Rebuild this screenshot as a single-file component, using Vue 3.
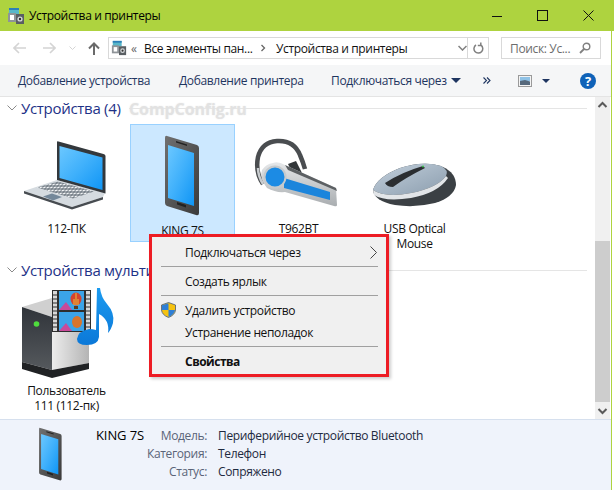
<template>
  <div class="window">
    <svg class="defs" width="0" height="0">
      <defs>
        <linearGradient id="screenGrad" x1="0" y1="0" x2="1" y2="1">
          <stop offset="0" stop-color="#6cc8ff" />
          <stop offset="0.5" stop-color="#3fb0fb" />
          <stop offset="1" stop-color="#0f95f5" />
        </linearGradient>
        <linearGradient id="phoneGrad" x1="0" y1="0" x2="1" y2="1">
          <stop offset="0" stop-color="#707070" />
          <stop offset="1" stop-color="#3a3a3a" />
        </linearGradient>
        <linearGradient id="silverGrad" x1="0" y1="0" x2="0" y2="1">
          <stop offset="0" stop-color="#e6e8ea" />
          <stop offset="1" stop-color="#a9adb0" />
        </linearGradient>
        <linearGradient id="mouseGrad" x1="0" y1="0" x2="1" y2="1">
          <stop offset="0" stop-color="#c3d0dc" />
          <stop offset="1" stop-color="#8b9dae" />
        </linearGradient>
        <linearGradient id="boxGrad" x1="0" y1="0" x2="1" y2="0">
          <stop offset="0" stop-color="#ececec" />
          <stop offset="1" stop-color="#b4b4b4" />
        </linearGradient>
        <linearGradient id="frontGrad" x1="0" y1="0" x2="0" y2="1">
          <stop offset="0" stop-color="#30343a" />
          <stop offset="1" stop-color="#55595d" />
        </linearGradient>
        <linearGradient id="noteGrad" x1="0" y1="0" x2="0" y2="1">
          <stop offset="0" stop-color="#1b9bf0" />
          <stop offset="1" stop-color="#0b78d8" />
        </linearGradient>
        <pattern id="keys" width="3.500" height="3" patternUnits="userSpaceOnUse" patternTransform="skewX(-38)">
          <rect width="3.500" height="3" fill="#5b6670" />
          <rect x="0.5" y="0.5" width="2.600" height="2" fill="#f1f3f5" />
        </pattern>
        <symbol id="phone" viewBox="160 130 48 86">
          <path d="M168 133 L198 142 Q200 143 200 145 L200 210 Q200 213 197 212 L168 203 Q166 202 166 200 L166 135 Q166 132 168 133Z" fill="url(#phoneGrad)" />
          <path d="M169 142 L195 150 L195 203 L169 195Z" fill="url(#screenGrad)" />
          <path d="M177 138 L188 141.5 L188 143 L177 139.5Z" fill="#222" />
          <path d="M178 199 L187 202 L187 204.5 L178 201.5Z" fill="#222" />
        </symbol>
        <symbol id="devices" viewBox="0 0 18 18">
          <rect x="2" y="1" width="10" height="6" fill="#58b7c9" />
          <rect x="2" y="1" width="10" height="2" fill="#2c7fb8" />
          <rect x="1" y="6" width="8" height="9" fill="#8f9498" />
          <rect x="3" y="8" width="4" height="5" fill="#fff" />
          <rect x="9" y="7" width="8" height="10" fill="#5a5f63" />
          <circle cx="13" cy="12" r="2.6" fill="#d6d9db" />
          <circle cx="13" cy="12" r="1.2" fill="#333" />
        </symbol>
      </defs>
    </svg>

    <div class="titlebar">
      <svg class="title-icon" width="18" height="18"><use href="#devices" /></svg>
      <span class="title-text">Устройства и принтеры</span>
      <div class="win-controls">
        <svg width="10" height="10" viewBox="0 0 10 10"><path d="M0 5.5H10" stroke="#111" fill="none" /></svg>
        <svg width="11" height="11" viewBox="0 0 11 11"><rect x="0.5" y="0.5" width="10" height="10" stroke="#111" fill="none" /></svg>
        <svg width="11" height="11" viewBox="0 0 11 11"><path d="M0.5 0.5L10.5 10.5M10.5 0.5L0.5 10.5" stroke="#111" fill="none" /></svg>
      </div>
    </div>

    <div class="navbar">
      <svg class="nav-back" width="13" height="12" viewBox="0 0 13 12"><path d="M6 1L1 6L6 11M1 6H13" stroke="#d4d4d4" stroke-width="1.6" fill="none" /></svg>
      <svg class="nav-fwd" width="13" height="12" viewBox="0 0 13 12"><path d="M7 1L12 6L7 11M12 6H0" stroke="#d4d4d4" stroke-width="1.6" fill="none" /></svg>
      <svg class="nav-down" width="7" height="5" viewBox="0 0 7 5"><path d="M0.5 0.5L3.5 3.5L6.5 0.5" stroke="#d4d4d4" fill="none" /></svg>
      <svg class="nav-up" width="12" height="13" viewBox="0 0 12 13"><path d="M1 6.5L6 1.5L11 6.5M6 1.5V13" stroke="#6a6a6a" stroke-width="2" fill="none" /></svg>
      <div class="address">
        <svg class="addr-icon" width="16" height="16"><use href="#devices" /></svg>
        <span class="crumb-more">«</span>
        <span class="crumb-a">Все элементы пан...</span>
        <svg class="crumb-sep" width="5" height="8" viewBox="0 0 5 8"><path d="M1 1L4 4L1 7" stroke="#666" stroke-width="1.3" fill="none" /></svg>
        <span class="crumb-b">Устройства и принтеры</span>
        <svg class="addr-down" width="9" height="6" viewBox="0 0 9 6"><path d="M0.5 1L4.5 5L8.5 1" stroke="#808080" stroke-width="1.5" fill="none" /></svg>
        <div class="addr-refresh">
          <svg width="11" height="12" viewBox="0 0 11 12"><path d="M3 3A4.4 4.4 0 1 0 8 3.2M7.8 0.5V3.6H4.8" stroke="#808080" stroke-width="1.5" fill="none" /></svg>
        </div>
      </div>
      <div class="search">
        <span>Поиск: Ус...</span>
        <svg width="12" height="12" viewBox="0 0 12 12"><circle cx="7.5" cy="4.5" r="3.3" stroke="#808080" stroke-width="1.4" fill="none" /><path d="M5 7L1 11" stroke="#808080" stroke-width="1.8" /></svg>
      </div>
    </div>

    <div class="toolbar">
      <span class="tool t1">Добавление устройства</span>
      <span class="tool t2">Добавление принтера</span>
      <span class="tool t3">Подключаться через<i class="caret"></i></span>
      <svg class="more" width="8" height="7" viewBox="0 0 8 7"><path d="M0.5 0.5L3.5 3.5L0.5 6.500M4 0.5L7 3.5L4 6.500" stroke="#1e3560" stroke-width="1.1" fill="none" /></svg>
      <svg class="view-icon" width="14" height="12" viewBox="0 0 14 12">
        <rect x="0.5" y="0.5" width="13" height="11" fill="#f4f4f4" stroke="#9a9a9a" />
        <rect x="2" y="2" width="10" height="4" fill="#8fc2e6" />
        <path d="M2 6L7 5L12 6.500V10H2Z" fill="#56697c" />
      </svg>
      <i class="caret view-caret"></i>
      <span class="help">?</span>
    </div>

    <div class="body">
      <div class="content">
        <section class="group">
          <div class="group-head">
            <svg width="10" height="6" viewBox="0 0 10 6"><path d="M0.5 0.5L5 5L9.5 0.5" stroke="#8a8a8a" fill="none" /></svg>
            <span class="group-title">Устройства (4)</span>
            <span class="group-line"></span>
          </div>
          <div class="grid first">
            <div class="item">
              <svg class="icon" width="105" height="96" viewBox="14 124 105 96">
                <path d="M24 191 L57 180 L105 193 L103 197 L72 207 Z" fill="#d5dbe0" />
                <path d="M24 191 L72 207 L103 197 L103 199.500 L72 209.500 L24 193.500Z" fill="#474c51" />
                <path d="M37 187.500 L58 181.500 L94 191.500 L73 198.500Z" fill="url(#keys)" />
                <path d="M43 196.500 L52 193.500 L62 197 L53 200.500Z" fill="#74889a" />
                <path d="M57 142 Q57 141 58.500 141.500 L103.500 154 Q105.500 154.500 105.500 156 L105.500 193.500 L57 180Z" fill="#33383c" />
                <path d="M59.500 146 L102.500 157.500 L102.500 190 L59.500 178Z" fill="url(#screenGrad)" />
              </svg>
              <span class="label">112-ПК</span>
            </div>
            <div class="item selected">
              <svg class="icon phone-box" width="48" height="86"><use href="#phone" /></svg>
              <span class="label">KING 7S</span>
            </div>
            <div class="item">
              <svg class="icon" width="105" height="96" viewBox="246 124 105 96">
                <path d="M263 184 Q255 172 258 157 Q262 142 277 141 Q294 140 300 155 Q303 162 305 169" stroke="#4a4d50" stroke-width="4.5" fill="none" />
                <path d="M263 184 Q258 176 258 168" stroke="#c9cdd0" stroke-width="2.5" fill="none" />
                <path d="M288 164 L296 161 L302 173 L294 176Z" fill="#33373a" />
                <path d="M273 163 Q278 161 285 165 L336 188 L337 205 Q337 207 334 206 L285 192 Q276 193 267 188 Q259 178 262 170 Q266 164 273 163Z" fill="url(#silverGrad)" />
                <path d="M285 165 L336 188 L337 191 L288 170Z" fill="#5c6063" />
                <path d="M284 178 L330 192 L330 200 L284 188Z" fill="#1b85dc" />
                <circle cx="275" cy="177" r="10.5" fill="#1c8be4" stroke="#c6cacd" stroke-width="2" />
              </svg>
              <span class="label">T962BT</span>
            </div>
            <div class="item">
              <svg class="icon" width="105" height="96" viewBox="362 124 105 96">
                <path d="M373 190 Q377 177 400 168 Q425 160 443 167 Q456 173 456 185 Q454 197 435 203 Q415 208 395 205 Q374 201 373 190Z" fill="#3b4044" />
                <path d="M373 190 Q377 177 400 168 Q425 160 441 166 Q449 170 446 176 Q437 188 411 193 Q385 198 373 190Z" fill="url(#mouseGrad)" />
                <path d="M373 190 Q385 198 411 193 Q437 188 446 176 L448 178 Q438 193 411 198 Q385 202 374 195Z" fill="#e2e5e8" />
                <path d="M385 183 Q402 172 423 166 L425 168 Q405 178 393 187 Q387 187 385 183Z" fill="#2b2e31" />
                <circle cx="423" cy="166.5" r="0.9" fill="#39d04a" />
              </svg>
              <span class="label">USB Optical Mouse</span>
            </div>
          </div>
        </section>

        <section class="group second">
          <div class="group-head">
            <svg width="10" height="6" viewBox="0 0 10 6"><path d="M0.5 0.5L5 5L9.5 0.5" stroke="#8a8a8a" fill="none" /></svg>
            <span class="group-title">Устройства мультимедиа</span>
            <span class="group-line"></span>
          </div>
          <div class="grid">
            <div class="item media">
              <svg class="icon" width="105" height="101" viewBox="14 281 105 101">
                <path d="M22 307 L52 298 L89 306 L89 309 L52 317Z" fill="#d0d0d0" />
                <path d="M52 317 L89 309 L89 363 L52 370Z" fill="url(#boxGrad)" />
                <path d="M22 307 L52 317 L52 370 L22 362Z" fill="url(#frontGrad)" />
                <path d="M22 362 L52 370 L89 363 L89 369 L52 378 L22 369Z" fill="#202224" />
                <circle cx="36.500" cy="324" r="2.800" fill="#4fdc3d" />
                <rect x="52" y="290" width="39" height="42" fill="#2e2e2e" />
                <rect x="53" y="291" width="4" height="40" fill="#d8d8d8" />
                <rect x="86" y="291" width="4" height="40" fill="#d8d8d8" />
                <path d="M53 295H57M53 299H57M53 303H57M53 307H57M53 311H57M53 315H57M53 319H57M53 323H57M53 327H57M86 295H90M86 299H90M86 303H90M86 307H90M86 311H90M86 315H90M86 319H90M86 323H90M86 327H90" stroke="#2e2e2e" stroke-width="1.2" />
                <rect x="59" y="291" width="25" height="19" fill="#3ba4e8" />
                <rect x="59" y="312" width="25" height="19" fill="#3ba4e8" />
                <ellipse cx="76" cy="299" rx="5.500" ry="6.500" fill="#d8432c" />
                <path d="M74 299V305M76 293V305M78 299V305" stroke="#e9c23a" />
                <rect x="74" y="306" width="4" height="3" fill="#5a3a20" />
                <ellipse cx="77" cy="322" rx="5" ry="6" fill="#d8752c" />
                <path d="M59 310 L66 302 L72 310Z M59 331 L66 323 L72 331Z" fill="#c94a9a" />
                <path d="M97 288 L100 288 Q101 297 107 304 Q115 313 113 323 Q111 330 108 333 Q110 320 99 314 L99 337 Q98 345 87 345 Q77 345 77 339 Q78 331 89 329 Q93 329 96 330Z" fill="url(#noteGrad)" />
              </svg>
              <span class="label">Пользователь<br />111 (112-пк)</span>
            </div>
          </div>
        </section>
      </div>
      <div class="scrollbar">
        <svg class="sb-arrow" width="15" height="17" viewBox="0 0 15 17"><path d="M3.500 10L7.500 6L11.500 10" stroke="#5a5a5a" stroke-width="2" fill="none" /></svg>
        <div class="sb-track"><div class="sb-thumb"></div></div>
        <svg class="sb-arrow" width="15" height="17" viewBox="0 0 15 17"><path d="M3.500 7L7.500 11L11.500 7" stroke="#5a5a5a" stroke-width="2" fill="none" /></svg>
      </div>
    </div>

    <div class="details">
      <svg class="detail-phone" width="32" height="57"><use href="#phone" /></svg>
      <div class="detail-name">KING 7S</div>
      <div class="detail-table">
        <span class="k">Модель:</span><span class="v">Периферийное устройство Bluetooth</span>
        <span class="k">Категория:</span><span class="v">Телефон</span>
        <span class="k">Статус:</span><span class="v">Сопряжено</span>
      </div>
    </div>

    <div class="watermark">CompConfig.ru</div>
    <div class="edge"></div>

    <div class="menu">
      <div class="menu-item">
        <span class="slot"></span><span>Подключаться через</span>
        <svg class="submenu" width="7" height="13" viewBox="0 0 7 13"><path d="M0.5 0.5L6.500 6.500L0.5 12.500" stroke="#444" fill="none" /></svg>
      </div>
      <div class="menu-sep"></div>
      <div class="menu-item"><span class="slot"></span><span>Создать ярлык</span></div>
      <div class="menu-sep"></div>
      <div class="menu-item">
        <span class="slot">
          <svg width="15" height="16" viewBox="0 0 15 16">
            <path d="M7.500 0.5L14.500 3V8Q14 13 7.500 15.500Q1 13 0.5 8V3Z" fill="#f5c211" stroke="#4a5a78" stroke-width="0.8" />
            <path d="M7.500 1.200L7.500 8L1 8V3.300Z" fill="#2f7fd6" />
            <path d="M7.500 8H14V8Q13.500 12.500 7.500 15Z" fill="#2f7fd6" />
          </svg>
        </span>
        <span>Удалить устройство</span>
      </div>
      <div class="menu-item"><span class="slot"></span><span>Устранение неполадок</span></div>
      <div class="menu-sep"></div>
      <div class="menu-item strong"><span class="slot"></span><span>Свойства</span></div>
    </div>
  </div>
</template>

<script setup>
</script>

<style scoped>
.window {
  position: relative;
  width: 614px;
  height: 490px;
  overflow: hidden;
  display: flex;
  flex-direction: column;
  background: #fff;
  font-family: "Open Sans", "Noto Sans", sans-serif;
  font-size: 12px;
  letter-spacing: -0.35px;
  color: #111;
}

.defs {
  position: absolute;
}

.titlebar {
  flex: none;
  height: 31px;
  display: flex;
  align-items: center;
  background: #aed33f;
  padding-left: 7px;
}

.title-text {
  margin-left: 4px;
  color: #000;
}

.win-controls {
  margin-left: auto;
  display: flex;
  align-items: center;
  gap: 35px;
  padding-right: 20px;
}

.navbar {
  flex: none;
  height: 34px;
  display: flex;
  align-items: center;
  padding-left: 13px;
  margin-right: 3px;
}

.nav-fwd {
  margin-left: 17px;
}

.nav-down {
  margin-left: 13px;
}

.nav-up {
  margin-left: 12px;
}

.address {
  margin-left: 8px;
  width: 381px;
  height: 22px;
  box-sizing: border-box;
  border: 1px solid #d9d9d9;
  display: flex;
  align-items: center;
  padding-left: 2px;
}

.crumb-more {
  margin-left: 4px;
  width: 13px;
  color: #666;
}

.crumb-a {
  width: 113px;
  white-space: nowrap;
}

.crumb-sep {
  width: 12px;
  margin-right: 7px;
}

.crumb-b {
  width: 173px;
}

.addr-down {
  margin-left: 9px;
}

.addr-refresh {
  margin-left: auto;
  width: 20px;
  height: 100%;
  border-left: 1px solid #d9d9d9;
  display: flex;
  align-items: center;
  justify-content: center;
}

.search {
  margin-left: 12px;
  width: 100px;
  height: 22px;
  box-sizing: border-box;
  border: 1px solid #d9d9d9;
  display: flex;
  align-items: center;
  justify-content: space-between;
  padding: 0 9px 0 8px;
  color: #6d6d6d;
}

.toolbar {
  flex: none;
  height: 32px;
  box-sizing: border-box;
  border-bottom: 1px solid #e4e4e4;
  background: #f5f6f7;
  display: flex;
  align-items: center;
  padding-left: 18px;
  margin-right: 3px;
  color: #1e3560;
}

.tool {
  flex: none;
  display: flex;
  align-items: center;
}

.t1 {
  width: 161px;
}

.t2 {
  width: 152px;
}

.t3 {
  width: 152px;
}

.caret {
  display: inline-block;
  width: 0;
  height: 0;
  border-left: 5px solid transparent;
  border-right: 5px solid transparent;
  border-top: 5px solid #1e3560;
  margin-left: 4px;
}

.more {
  flex: none;
  margin-right: 27px;
}

.view-caret {
  margin-left: 10px;
  border-left-width: 4px;
  border-right-width: 4px;
  border-top-width: 4px;
}

.help {
  margin-left: 30px;
  width: 16px;
  height: 16px;
  border-radius: 50%;
  background: #0f62b8;
  color: #fff;
  font-weight: 700;
  font-size: 13px;
  line-height: 16px;
  text-align: center;
}

.body {
  flex: 1;
  min-height: 0;
  display: flex;
  margin-right: 3px;
  padding-right: 1px;
}

.content {
  flex: 1;
  min-width: 0;
  overflow: hidden;
}

.group-head {
  height: 22px;
  display: flex;
  align-items: center;
  padding-left: 7px;
  margin-right: 8px;
}

.group-title {
  margin-left: 4px;
  font-size: 15px;
  letter-spacing: -0.3px;
  color: #1e3287;
  white-space: nowrap;
}

.group-line {
  flex: 1;
  height: 1px;
  margin-left: 8px;
  background: #e5e5e5;
}

.grid {
  margin-top: 5px;
  margin-left: 14px;
  display: flex;
  gap: 11px;
}

.grid.first {
  height: 118px;
}

.second {
  margin-top: 17px;
}

.second .grid {
  margin-top: 0;
}

.item {
  flex: none;
  width: 105px;
  height: 118px;
  box-sizing: border-box;
  display: flex;
  flex-direction: column;
  align-items: center;
  text-align: center;
  line-height: 15px;
  border: 1px solid transparent;
}

.item .icon {
  flex: none;
  margin: -1px;
}

.item.media {
  height: auto;
}

.phone-box {
  margin-top: 8px !important;
  margin-bottom: 2px !important;
}

.selected {
  background: #cce8ff;
  border-color: #99d1ff;
}

.label {
  margin-top: 2px;
  padding: 0 8px;
}

.scrollbar {
  flex: none;
  width: 15px;
  display: flex;
  flex-direction: column;
  background: #f0f0f0;
}

.sb-arrow {
  flex: none;
}

.sb-track {
  flex: 1;
  display: flex;
  flex-direction: column;
  justify-content: flex-end;
}

.sb-thumb {
  height: 161px;
  background: #cdcdcd;
}

.details {
  flex: none;
  height: 71px;
  box-sizing: border-box;
  border-top: 1px solid #d6e0ee;
  margin-right: 3px;
  background: #eff3fb;
  display: flex;
  align-items: flex-start;
  padding-top: 8px;
}

.detail-phone {
  margin-left: 35px;
  margin-top: -2px;
  flex: none;
}

.detail-name {
  margin-left: 29px;
  width: 66px;
  font-size: 13px;
  letter-spacing: -0.1px;
  line-height: 15px;
  color: #000;
}

.detail-table {
  display: grid;
  grid-template-columns: 55px auto;
  grid-auto-rows: 18px;
  column-gap: 11px;
  line-height: 15px;
  margin-left: -10px;
}

.k {
  text-align: right;
  color: #5a6478;
  white-space: nowrap;
  justify-self: end;
}

.v {
  color: #1e2a40;
}

.watermark {
  position: absolute;
  left: 129px;
  top: 98px;
  font-size: 16px;
  font-weight: 700;
  letter-spacing: -0.1px;
  color: #e2e2e2;
  text-shadow: 0 0 2px #ececec;
}

.edge {
  position: absolute;
  left: 611px;
  top: 31px;
  width: 1px;
  height: 459px;
  background: #aed33f;
}

.menu {
  position: absolute;
  left: 149px;
  top: 234px;
  width: 240px;
  height: 143px;
  box-sizing: border-box;
  border: 3px solid #ed1c24;
  background: #f0f0f0;
  padding-top: 4px;
  box-shadow: 2px 2px 3px rgba(0, 0, 0, 0.2);
  color: #111;
}

.menu-item {
  position: relative;
  height: 22px;
  display: flex;
  align-items: center;
  padding-left: 9px;
}

.slot {
  flex: none;
  width: 24px;
  display: flex;
  align-items: center;
}

.submenu {
  position: absolute;
  right: 9px;
  top: 5px;
}

.menu-sep {
  height: 1px;
  margin: 3px 8px 3px 9px;
  background: #a0a0a0;
}

.strong {
  font-weight: 700;
  letter-spacing: -0.5px;
}
</style>
